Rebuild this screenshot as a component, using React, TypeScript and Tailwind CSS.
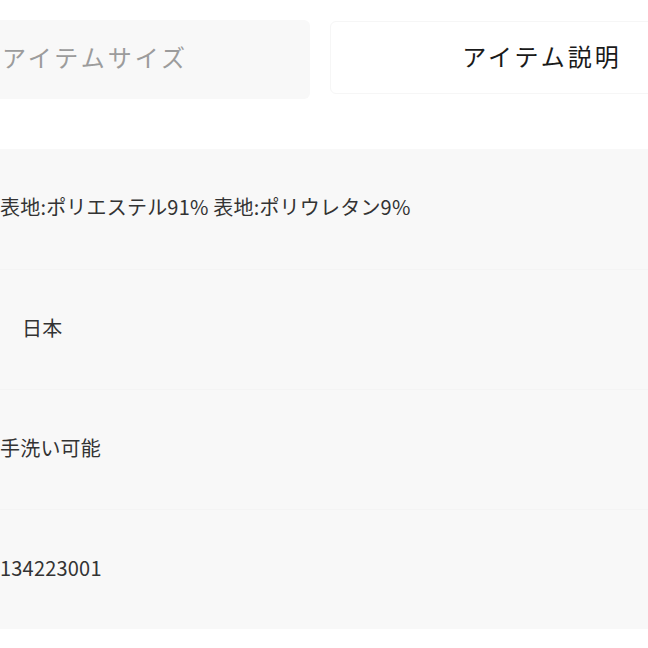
const rows = [
  { value: '表地:ポリエステル91% 表地:ポリウレタン9%', indent: false },
  { value: '日本', indent: true },
  { value: '手洗い可能', indent: false },
  { value: '134223001', indent: false },
];

export default function App() {
  return (
    <div
      className="w-[648px] h-[648px] overflow-hidden bg-white"
      style={{ fontFamily: '"Noto Sans CJK JP", "Noto Sans", sans-serif' }}
    >
      {/* タブ */}
      <div className="flex gap-[20px] ml-[-120px] pt-[20px]">
        <button
          type="button"
          className="w-[430px] h-[79px] shrink-0 pb-[5px] rounded-[6px] bg-[#f8f8f8] text-[24px] tracking-[3px] text-[#9c9c9c]"
        >
          アイテムサイズ
        </button>
        <button
          type="button"
          className="w-[424px] h-[73px] mt-[1px] shrink-0 pb-[3px] rounded-[6px] border border-[#f6f6f6] bg-white text-[24px] tracking-[3px] text-[#1a1a1a]"
        >
          アイテム説明
        </button>
      </div>

      {/* 説明リスト */}
      <div className="mt-[50px] bg-[#f8f8f8]">
        {rows.map((row, i) => (
          <div
            key={i}
            className={`h-[120px] flex items-center pb-[4px] text-[20px] tracking-[0.2px] text-[#333] ${
              i > 0 ? 'border-t border-[#f4f4f4]' : ''
            } ${row.indent ? 'pl-[22px]' : ''}`}
          >
            {row.value}
          </div>
        ))}
      </div>
    </div>
  );
}
